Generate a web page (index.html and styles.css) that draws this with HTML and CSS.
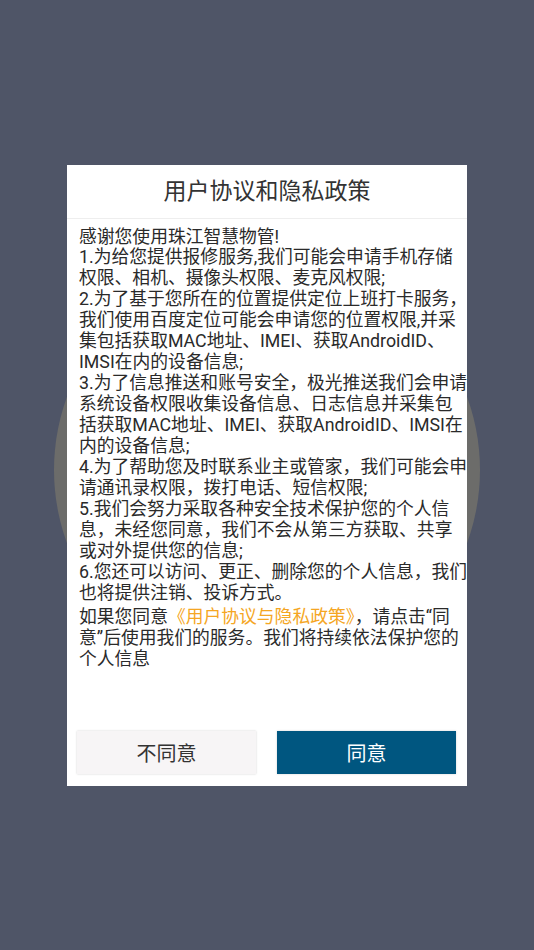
FILE: index.html
```html
<!DOCTYPE html>
<html lang="zh">
<head>
<meta charset="utf-8">
<link rel="stylesheet" href="styles.css">
</head>
<body>
<div class="screen">
  <div class="halo"></div>
  <div class="dialog">
    <div class="title">用户协议和隐私政策</div>
    <div class="content">
      <p class="text">感谢您使用珠江智慧物管!<br>1.为给您提供报修服务,我们可能会申请手机存储<br>权限、相机、摄像头权限、麦克风权限;<br>2.为了基于您所在的位置提供定位上班打卡服务，<br>我们使用百度定位可能会申请您的位置权限,并采<br>集包括获取MAC地址、IMEI、获取AndroidID、<br>IMSI在内的设备信息;<br>3.为了信息推送和账号安全，极光推送我们会申请<br>系统设备权限收集设备信息、日志信息并采集包<br>括获取MAC地址、IMEI、获取AndroidID、IMSI在<br>内的设备信息;<br>4.为了帮助您及时联系业主或管家，我们可能会申<br>请通讯录权限，拨打电话、短信权限;<br>5.我们会努力采取各种安全技术保护您的个人信<br>息，未经您同意，我们不会从第三方获取、共享<br>或对外提供您的信息;<br>6.您还可以访问、更正、删除您的个人信息，我们<br>也将提供注销、投诉方式。</p>
      <p class="text agree">如果您同意<span class="link">《用户协议与隐私政策》</span>，请点击“同<br>意”后使用我们的服务。我们将持续依法保护您的<br>个人信息</p>
    </div>
    <div class="actions">
      <button class="btn btn-no">不同意</button>
      <button class="btn btn-yes">同意</button>
    </div>
  </div>
</div>
</body>
</html>
```
FILE: styles.css
```css
html, body {
  margin: 0;
  padding: 0;
}
body {
  background: #4f5567;
  font-family: Roboto, "Noto Sans CJK SC", sans-serif;
}
.screen {
  position: relative;
  width: 534px;
  height: 950px;
  display: flex;
  align-items: center;
  justify-content: center;
  overflow: hidden;
}
.halo {
  position: absolute;
  left: 54px;
  top: 257px;
  width: 426px;
  height: 426px;
  border-radius: 50%;
  background: #6c6c6a;
}
.dialog {
  position: relative;
  width: 400px;
  height: 621px;
  background: #ffffff;
  display: flex;
  flex-direction: column;
}
.title {
  height: 53px;
  line-height: 53px;
  text-align: center;
  font-size: 23px;
  color: #333333;
  border-bottom: 1px solid #eeeeee;
}
.content {
  flex: 1;
  padding: 8px 0 0 12px;
}
.text {
  margin: 0;
  font-size: 17.8px;
  line-height: 20.95px;
  color: #2a2a2a;
  white-space: nowrap;
}
.agree {
  margin-top: 3px;
}
.link {
  color: #f5a623;
}
.actions {
  display: flex;
  gap: 21px;
  padding: 0 11px 12px 10px;
}
.btn {
  flex: 1;
  height: 43px;
  border: none;
  font-family: Roboto, "Noto Sans CJK SC", sans-serif;
  font-size: 20px;
  padding: 0;
}
.btn-no {
  background: #f7f5f6;
  color: #333333;
  box-shadow: 0 0 2px rgba(0, 0, 0, 0.18);
}
.btn-yes {
  background: #005680;
  color: #ffffff;
  box-shadow: 0 0 2px rgba(0, 0, 0, 0.18);
}
```
